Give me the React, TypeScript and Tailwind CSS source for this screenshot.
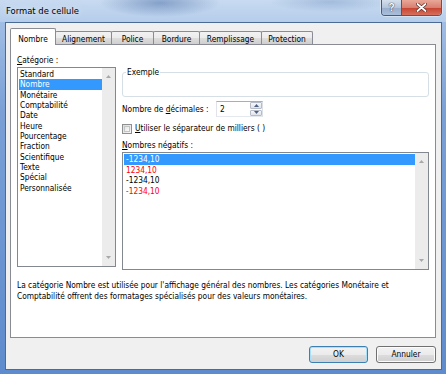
import React from "react";

const F = "font-['DejaVu_Sans_Condensed','Liberation_Sans',sans-serif]";

function UpTri({ c = "#a8a8a8" }: { c?: string }) {
  return (
    <svg width="5" height="3" viewBox="0 0 5 3">
      <path d="M0 3 L2.5 0 L5 3Z" fill={c} />
    </svg>
  );
}
function DownTri({ c = "#a8a8a8" }: { c?: string }) {
  return (
    <svg width="5" height="3" viewBox="0 0 5 3">
      <path d="M0 0 L2.5 3 L5 0Z" fill={c} />
    </svg>
  );
}

function Scrollbar() {
  return (
    <div className="w-[13px] h-full shrink-0 bg-[#ececec] flex flex-col justify-between items-center py-[7px]">
      <UpTri />
      <DownTri />
    </div>
  );
}

const categories = [
  "Standard",
  "Nombre",
  "Monétaire",
  "Comptabilité",
  "Date",
  "Heure",
  "Pourcentage",
  "Fraction",
  "Scientifique",
  "Texte",
  "Spécial",
  "Personnalisée",
];

const negatives = [
  { t: "-1234,10", cls: "bg-[#3399ff] text-white" },
  { t: "1234,10", cls: "text-[#ff0000]" },
  { t: "-1234,10", cls: "text-black" },
  { t: "-1234,10", cls: "text-[#ff0000]" },
];

const tabs = [
  { label: "Alignement", w: "w-[57px]" },
  { label: "Police", w: "w-[43px]" },
  { label: "Bordure", w: "w-[47px]" },
  { label: "Remplissage", w: "w-[63px]" },
  { label: "Protection", w: "w-[52px]" },
];

export default function App() {
  return (
    <div
      className={`w-[446px] h-[374px] flex flex-col overflow-hidden bg-[linear-gradient(to_bottom,#a9c4e8,#7aa0d6_30%,#5e8bcd)] ${F} text-black text-[8.3px] leading-[10.35px]`}
    >
      {/* Title bar */}
      <div className="h-[22px] shrink-0 flex justify-between pl-[6px] pr-[4px] bg-[radial-gradient(ellipse_60px_14px_at_160px_3px,rgba(80,115,170,0.55),transparent),radial-gradient(ellipse_60px_10px_at_330px_2px,rgba(100,135,185,0.35),transparent),linear-gradient(to_bottom,#c7daf0,#b5cdeb)]">
        <span className="mt-[5px] text-[9.4px] leading-[12px] [text-shadow:0_0_6px_rgba(255,255,255,0.9)]">
          Format de cellule
        </span>
        <div className="flex h-[16px] rounded-b-[4px] border border-t-0 border-[#4a5b78] overflow-hidden shadow-[0_0_0_1px_rgba(255,255,255,0.35)]">
          <div className="w-[20px] flex items-center justify-center border-r border-[#4a5b78] bg-[linear-gradient(to_bottom,#d4dfec,#b4c5db_50%,#97adcb_51%,#aabfdb)]">
            <span className="font-['Liberation_Sans',sans-serif] font-bold text-[10px] leading-[10px] text-white [text-shadow:0_0_1px_#333,0_0_1px_#333]">
              ?
            </span>
          </div>
          <div className="w-[39px] flex items-center justify-center bg-[linear-gradient(to_bottom,#e9a798,#d88070_50%,#c5412f_51%,#d6705c)]">
            <svg width="11" height="9" viewBox="0 0 11 9">
              <path d="M1.5 1 L9.5 8 M9.5 1 L1.5 8" stroke="#5a2a22" strokeWidth="3.2" strokeLinecap="round" />
              <path d="M1.5 1 L9.5 8 M9.5 1 L1.5 8" stroke="#ffffff" strokeWidth="1.8" strokeLinecap="round" />
            </svg>
          </div>
        </div>
      </div>

      {/* Client area */}
      <div className="flex-1 flex pl-[5px] pr-[4px] pb-[4px]">
        <div className="flex-1 flex flex-col border border-[#4b6a94] bg-[#f0f0f0]">
          {/* Tabs */}
          <div className="flex items-end pl-[4px] pt-[5px] h-[21px] shrink-0">
            <div className="relative z-10 w-[46px] h-[17px] -mb-px flex items-end justify-center pb-[1px] border border-b-0 border-[#898c95] rounded-t-[2px] bg-white">
              Nombre
            </div>
            {tabs.map((t) => (
              <div
                key={t.label}
                className={`${t.w} -ml-px h-[13px] flex items-end justify-center border border-b-0 border-[#898c95] rounded-t-[2px] bg-[linear-gradient(to_bottom,#f2f2f2,#ebebeb_50%,#dddddd_51%,#cfcfcf)]`}
              >
                {t.label}
              </div>
            ))}
          </div>

          {/* Panel */}
          <div className="ml-[4px] mr-[5px] h-[294px] shrink-0 border border-[#898c95] bg-white flex flex-col pl-[6px] pt-[10px]">
            <div className="h-[12px]">
              <u className="no-underline">
                <span className="underline underline-offset-[1px]">C</span>atégorie :
              </u>
            </div>
            <div className="flex gap-[6px]">
              {/* Category list */}
              <div className="w-[99px] h-[200px] border border-[#828790] flex">
                <div className="flex-1 pl-[1px] pt-[1px] flex flex-col">
                  {categories.map((c) => (
                    <div
                      key={c}
                      className={`h-[10.35px] pl-[1px] whitespace-nowrap ${c === "Nombre" ? "bg-[#3399ff] text-white" : ""}`}
                    >
                      {c}
                    </div>
                  ))}
                </div>
                <Scrollbar />
              </div>

              {/* Right column */}
              <div className="w-[307px] flex flex-col">
                <fieldset className="h-[30px] border border-[#d5dfe5] rounded-[3px]">
                  <legend className="ml-[3px] px-[1px] leading-[10.35px]">Exemple</legend>
                </fieldset>

                <div className="mt-[4px] flex items-center h-[16px]">
                  <div className="w-[94px] whitespace-nowrap">
                    Nombre de <span className="underline underline-offset-[1px]">d</span>écimales :
                  </div>
                  <div className="w-[47px] h-[16px] flex border border-[#abadb3] border-l-[#e2e3ea] border-r-[#dbdfe6] border-b-[#e3e9ef] bg-white">
                    <div className="flex-1 pl-[3px] flex items-center">2</div>
                    <div className="w-[12px] flex flex-col gap-[1px] py-[0px]">
                      <div className="flex-1 flex items-center justify-center border border-[#b6bdc8] rounded-[1px] bg-[linear-gradient(to_bottom,#f6f7f9,#dfe3ea)]">
                        <UpTri c="#4d6185" />
                      </div>
                      <div className="flex-1 flex items-center justify-center border border-[#b6bdc8] rounded-[1px] bg-[linear-gradient(to_bottom,#f6f7f9,#dfe3ea)]">
                        <DownTri c="#4d6185" />
                      </div>
                    </div>
                  </div>
                </div>

                <div className="mt-[6px] h-[11px] flex items-center gap-[3px]">
                  <div className="w-[10px] h-[10px] border border-[#8e8f8f] bg-[linear-gradient(135deg,#dcdcdc,#f7f7f7)] p-[1px]">
                    <div className="w-full h-full border border-[#c4c4c4] bg-[linear-gradient(135deg,#e4e4e4,#fbfbfb)]" />
                  </div>
                  <div className="whitespace-nowrap">
                    <span className="underline underline-offset-[1px]">U</span>tiliser le séparateur de milliers ( )
                  </div>
                </div>

                <div className="mt-[6px] whitespace-nowrap">
                  <span className="underline underline-offset-[1px]">N</span>ombres négatifs :
                </div>

                <div className="mt-[2px] h-[118px] border border-[#828790] flex">
                  <div className="flex-1 pl-[1px] pt-[1px] flex flex-col">
                    {negatives.map((n, i) => (
                      <div key={i} className={`h-[10.5px] pl-[2px] whitespace-nowrap ${n.cls}`}>
                        {n.t}
                      </div>
                    ))}
                  </div>
                  <Scrollbar />
                </div>
              </div>
            </div>

            <p className="mt-[10px] whitespace-nowrap leading-[10.7px]">
              La catégorie Nombre est utilisée pour l'affichage général des nombres. Les catégories Monétaire et
              <br />
              Comptabilité offrent des formatages spécialisés pour des valeurs monétaires.
            </p>
          </div>

          {/* Buttons */}
          <div className="mt-[8px] flex justify-end gap-[8px] pr-[5px]">
            <button className="w-[59px] h-[17px] rounded-[3px] border border-[#3c7fb1] shadow-[inset_0_0_0_1px_#a7e0f8] bg-[linear-gradient(to_bottom,#f2f2f2,#ebebeb_50%,#dddddd_51%,#cfcfcf)] flex items-center justify-center">
              OK
            </button>
            <button className="w-[60px] h-[17px] rounded-[3px] border border-[#707070] shadow-[inset_0_0_0_1px_#fcfcfc] bg-[linear-gradient(to_bottom,#f2f2f2,#ebebeb_50%,#dddddd_51%,#cfcfcf)] flex items-center justify-center">
              Annuler
            </button>
          </div>
        </div>
      </div>
    </div>
  );
}
